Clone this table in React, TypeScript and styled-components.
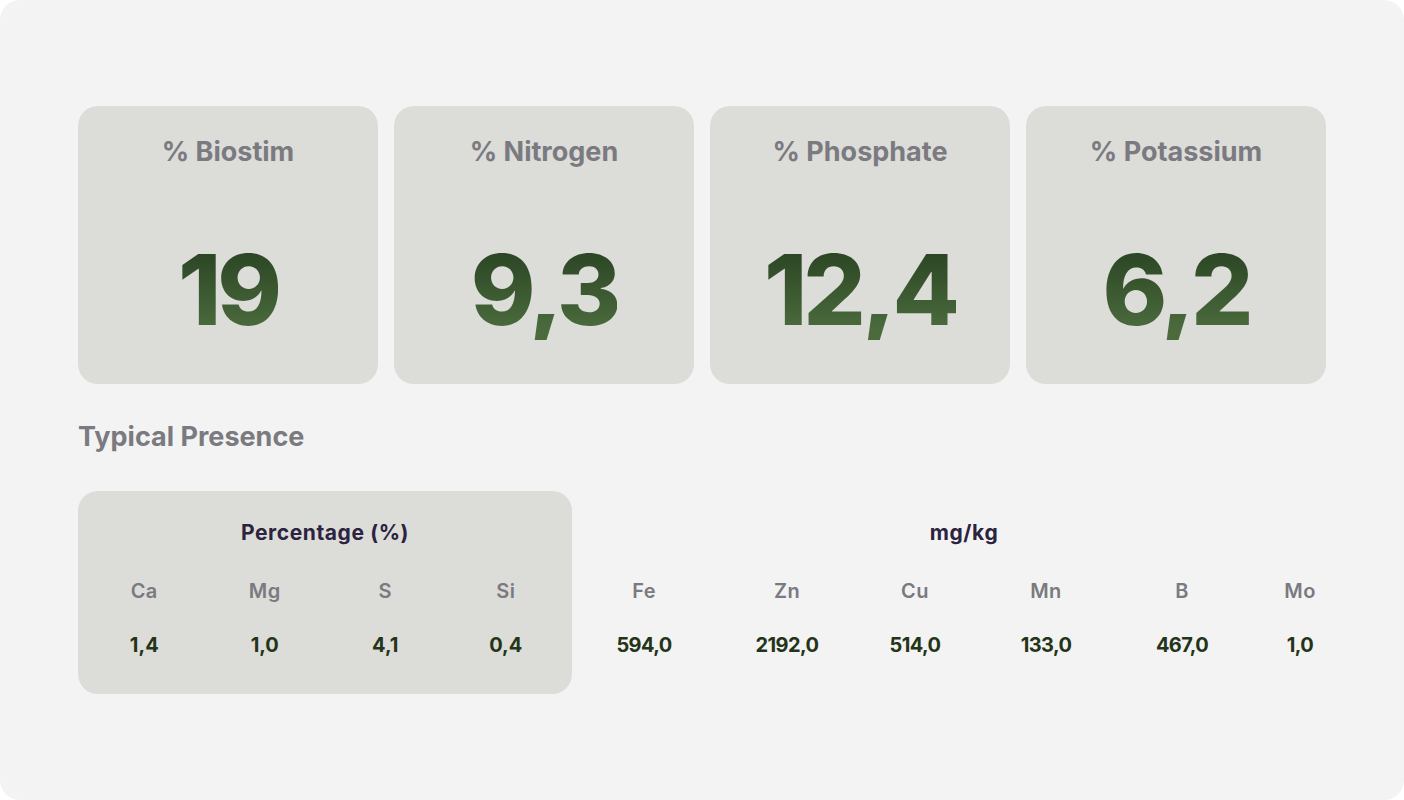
import styled, { createGlobalStyle } from "styled-components";

const GlobalStyle = createGlobalStyle`
  html, body {
    margin: 0;
    padding: 0;
    background: #ffffff;
  }
  * {
    box-sizing: border-box;
  }
`;

type Stat = { label: string; value: string };
type Element = { symbol: string; value: string };

const stats: Stat[] = [
  { label: "% Biostim", value: "19" },
  { label: "% Nitrogen", value: "9,3" },
  { label: "% Phosphate", value: "12,4" },
  { label: "% Potassium", value: "6,2" },
];

const percentage: Element[] = [
  { symbol: "Ca", value: "1,4" },
  { symbol: "Mg", value: "1,0" },
  { symbol: "S", value: "4,1" },
  { symbol: "Si", value: "0,4" },
];

const mgPerKg: Element[] = [
  { symbol: "Fe", value: "594,0" },
  { symbol: "Zn", value: "2192,0" },
  { symbol: "Cu", value: "514,0" },
  { symbol: "Mn", value: "133,0" },
  { symbol: "B", value: "467,0" },
  { symbol: "Mo", value: "1,0" },
];

export default function App() {
  return (
    <>
      <GlobalStyle />
      <Panel>
        <CardRow>
          {stats.map((stat) => (
            <StatCard key={stat.label}>
              <CardTitle>{stat.label}</CardTitle>
              <BigNumber>{stat.value}</BigNumber>
            </StatCard>
          ))}
        </CardRow>

        <SectionTitle>Typical Presence</SectionTitle>

        <TableRow>
          <ElementGroup $filled>
            <GroupHeading>Percentage (%)</GroupHeading>
            <ElementGrid $columns="repeat(4, 1fr)">
              {percentage.map((el) => (
                <Symbol key={el.symbol}>{el.symbol}</Symbol>
              ))}
              {percentage.map((el) => (
                <Value key={el.symbol}>{el.value}</Value>
              ))}
            </ElementGrid>
          </ElementGroup>

          <ElementGroup>
            <GroupHeading>mg/kg</GroupHeading>
            <ElementGrid $columns="144px 142px 114px 148px 124px 112px">
              {mgPerKg.map((el) => (
                <Symbol key={el.symbol}>{el.symbol}</Symbol>
              ))}
              {mgPerKg.map((el) => (
                <Value key={el.symbol} $tight>
                  {el.value}
                </Value>
              ))}
            </ElementGrid>
          </ElementGroup>
        </TableRow>
      </Panel>
    </>
  );
}

const Panel = styled.div`
  width: 1404px;
  height: 800px;
  background: #f3f3f3;
  border-radius: 20px;
  padding: 106px 78px 0;
  display: flex;
  flex-direction: column;
  font-family: Inter, "Liberation Sans", sans-serif;
`;

const CardRow = styled.div`
  display: grid;
  grid-template-columns: repeat(4, 300px);
  gap: 16px;
`;

const StatCard = styled.div`
  height: 278px;
  background: #dcdcd8;
  border-radius: 20px;
  padding-top: 30px;
  display: flex;
  flex-direction: column;
  align-items: center;
`;

const CardTitle = styled.div`
  font-size: 27px;
  line-height: 32px;
  font-weight: 700;
  color: #7a7a80;
`;

const BigNumber = styled.div`
  margin-top: 72px;
  font-size: 98px;
  line-height: 100px;
  font-weight: 800;
  letter-spacing: -4px;
  background: linear-gradient(180deg, #2b4524 10%, #4b6b3d 90%);
  -webkit-background-clip: text;
  background-clip: text;
  color: transparent;
`;

const SectionTitle = styled.div`
  margin-top: 37px;
  font-size: 27px;
  line-height: 32px;
  font-weight: 700;
  color: #7a7a80;
`;

const TableRow = styled.div`
  margin-top: 38px;
  display: flex;
`;

const ElementGroup = styled.div<{ $filled?: boolean }>`
  flex: none;
  width: ${(p) => (p.$filled ? "494px" : "auto")};
  height: 203px;
  padding: 30px ${(p) => (p.$filled ? "6px" : "0")} 0;
  border-radius: 20px;
  background: ${(p) => (p.$filled ? "#dcdcd8" : "transparent")};
  display: flex;
  flex-direction: column;
  align-items: stretch;
`;

const GroupHeading = styled.div`
  text-align: center;
  font-size: 21px;
  line-height: 24px;
  font-weight: 700;
  letter-spacing: 0.6px;
  color: #2b2340;
`;

const ElementGrid = styled.div<{ $columns: string }>`
  margin-top: 34px;
  display: grid;
  grid-template-columns: ${(p) => p.$columns};
  row-gap: 30px;
  text-align: center;
`;

const Symbol = styled.div`
  font-size: 20px;
  line-height: 24px;
  font-weight: 600;
  letter-spacing: 0.4px;
  color: #7a7a80;
`;

const Value = styled.div<{ $tight?: boolean }>`
  font-size: 20px;
  line-height: 24px;
  font-weight: 700;
  color: #243419;
  letter-spacing: ${(p) => (p.$tight ? "-0.6px" : "0")};
`;
